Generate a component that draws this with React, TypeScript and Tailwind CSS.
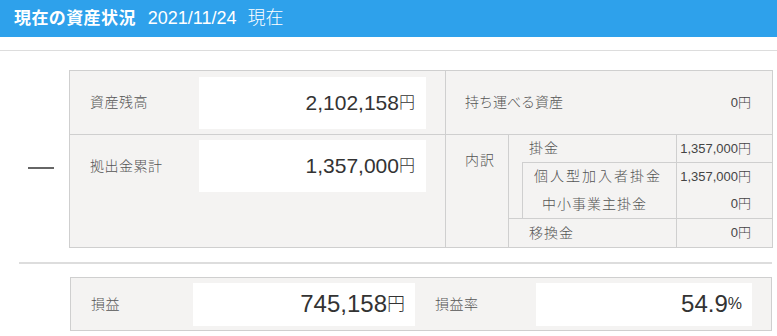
export default function App() {
  const font = { fontFamily: '"Liberation Sans", "Noto Sans CJK JP", sans-serif' };

  return (
    <div className="w-[777px] h-[336px] bg-white overflow-hidden text-[#444]" style={font}>
      {/* Title bar */}
      <div className="h-[37px] bg-[#2ea1eb] flex items-center pl-[14px] text-white">
        <span className="text-[17px] font-bold tracking-[0.4px]">現在の資産状況</span>
        <span className="ml-[12px] text-[18px]">2021/11/24</span>
        <span className="ml-[11px] text-[18px] font-light">現在</span>
      </div>
      <div className="mt-[13px] h-px bg-[#dddddd]" />

      {/* Balance summary */}
      <div className="mt-[19px] flex">
        <div className="w-[69px] shrink-0">
          <div className="mt-[97px] ml-[28px] h-[2px] w-[26px] bg-[#666]" />
        </div>
        <div className="w-[704px] border border-[#cfcfcf] bg-[#f4f3f2] font-light">
          <div className="flex h-[64px] border-b border-[#cfcfcf]">
            <div className="w-[376px] border-r border-[#cfcfcf] flex items-center">
              <div className="w-[129px] pl-[20px] text-[14px] tracking-[0.5px] text-[#555]">資産残高</div>
              <div className="w-[227px] h-[52px] bg-white flex items-center justify-end pr-[11px] text-[#333]">
                <span className="text-[21px] font-normal">2,102,158</span>
                <span className="text-[16px]">円</span>
              </div>
            </div>
            <div className="flex-1 flex items-center justify-between pl-[19px] pr-[21px]">
              <span className="text-[14px] text-[#555]">持ち運べる資産</span>
              <span className="text-[13px] text-[#444]">0円</span>
            </div>
          </div>

          <div className="flex h-[112px]">
            <div className="w-[376px] border-r border-[#cfcfcf] pt-[5px]">
              <div className="flex items-center">
                <div className="w-[129px] pl-[20px] text-[14px] tracking-[0.5px] text-[#555]">拠出金累計</div>
                <div className="w-[227px] h-[52px] bg-white flex items-center justify-end pr-[11px] text-[#333]">
                  <span className="text-[21px] font-normal">1,357,000</span>
                  <span className="text-[16px]">円</span>
                </div>
              </div>
            </div>
            <div className="flex-1 flex">
              <div className="w-[63px] border-r border-[#cfcfcf] pl-[19px] pt-[15px] text-[14px] leading-[20px] tracking-[1px] text-[#555]">
                内訳
              </div>
              <div className="flex-1 flex flex-col text-[#555]">
                <div className="h-[27px] flex items-center">
                  <span className="flex-1 pl-[20px] text-[14px] tracking-[1px]">掛金</span>
                  <span className="w-[96px] h-full border-l border-[#cfcfcf] flex items-center justify-end pr-[21px] text-[13px] text-[#444]">
                    1,357,000円
                  </span>
                </div>
                <div className="ml-[13px] border-l border-t border-[#cfcfcf]">
                  <div className="h-[27px] flex items-center">
                    <span className="flex-1 pl-[11px] text-[14px] tracking-[2px]">個人型加入者掛金</span>
                    <span className="w-[96px] h-full border-l border-[#cfcfcf] flex items-center justify-end pr-[21px] text-[13px] text-[#444]">
                      1,357,000円
                    </span>
                  </div>
                  <div className="h-[28px] flex items-center">
                    <span className="flex-1 pl-[19px] text-[14px] tracking-[1px]">中小事業主掛金</span>
                    <span className="w-[96px] h-full border-l border-[#cfcfcf] flex items-center justify-end pr-[21px] text-[13px] text-[#444]">
                      0円
                    </span>
                  </div>
                </div>
                <div className="flex-1 border-t border-[#cfcfcf] flex items-center">
                  <span className="flex-1 pl-[20px] text-[14px] tracking-[1px]">移換金</span>
                  <span className="w-[96px] h-full border-l border-[#cfcfcf] flex items-center justify-end pr-[21px] text-[13px] text-[#444]">
                    0円
                  </span>
                </div>
              </div>
            </div>
          </div>
        </div>
      </div>

      <div className="mt-[14px] ml-[19px] mr-[5px] h-[2px] bg-[#dddddd]" />

      {/* Profit / loss */}
      <div className="mt-[13px] ml-[70px] mr-[5px] h-[54px] border border-[#cfcfcf] bg-[#f4f3f2] flex items-center font-light">
        <div className="w-[122px] pl-[20px] text-[14px] tracking-[0.5px] text-[#555]">損益</div>
        <div className="w-[222px] h-[43px] bg-white flex items-center justify-end pr-[10px] text-[#333]">
          <span className="text-[24px] font-normal">745,158</span>
          <span className="text-[18px]">円</span>
        </div>
        <div className="w-[121px] pl-[20px] text-[14px] tracking-[0.5px] text-[#555]">損益率</div>
        <div className="w-[216px] h-[43px] bg-white flex items-center justify-end pr-[10px] text-[#333]">
          <span className="text-[24px] font-normal">54.9</span>
          <span className="text-[16px]">%</span>
        </div>
      </div>
    </div>
  );
}
